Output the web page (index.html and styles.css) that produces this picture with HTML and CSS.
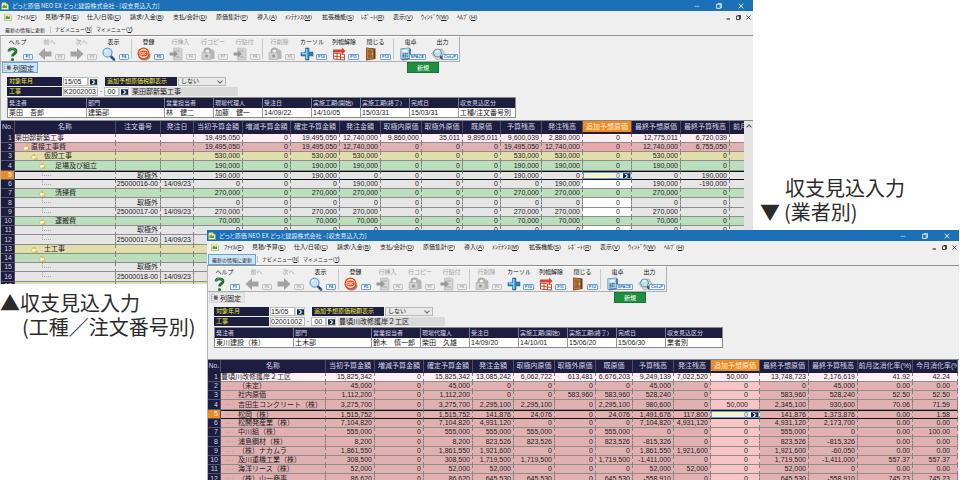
FILE: index.html
```html
<!DOCTYPE html>
<html lang="ja">
<head>
<meta charset="utf-8">
<title>収支見込入力</title>
<link rel="stylesheet" href="styles.css">
</head>
<body>
<svg class="sprite" aria-hidden="true">
  <symbol id="i-app" viewBox="0 0 16 16"><path fill="#e8efc0" stroke="#7fa05a" d="M1 3h11l3 3v9H1z"/><path fill="#5d9a4c" d="M3 8l3-3 3 3 3-2v6H3z"/><path fill="#f4e37a" d="M2 1h8v3H2z"/></symbol>
  <symbol id="i-help" viewBox="0 0 28 28"><path fill="none" stroke="#1c6b35" stroke-width="5.500" d="M6 9c0-7 14-7 14 0 0 5-7 4-7 10"/><path fill="none" stroke="#49a866" stroke-width="2" d="M6 8c0-6 13-6 13 0"/><circle cx="13" cy="25" r="3" fill="#1c6b35"/></symbol>
  <symbol id="i-prev" viewBox="0 0 28 28"><path fill="#a3a3a3" d="M1 14L14 2v7h13v10H14v7z"/></symbol>
  <symbol id="i-next" viewBox="0 0 28 28"><path fill="#a3a3a3" d="M27 14L14 2v7H1v10h13v7z"/></symbol>
  <symbol id="i-view" viewBox="0 0 28 28"><path stroke="#33557a" stroke-width="5" stroke-linecap="round" d="M17 18l7 7"/><circle cx="11" cy="11" r="9" fill="#bfe6fb" stroke="#7c9cb8" stroke-width="2.500"/><path fill="#fff" d="M5 11c0-4 3-6 7-6-3 2-5 4-7 6z"/></symbol>
  <symbol id="i-save" viewBox="0 0 28 28"><ellipse cx="15" cy="18" rx="12" ry="9" fill="#8f8f8f"/><circle cx="13" cy="13" r="12" fill="#d9482b"/><circle cx="13" cy="13" r="9.500" fill="#ffd995"/><ellipse cx="13" cy="13" rx="8.500" ry="6" fill="#e4572e"/><path fill="none" stroke="#fff" stroke-width="1.500" d="M9 10.500a2.500 2.500 0 1 0 .1 0zM14 10v6M18 10l-3 3 3 3"/></symbol>
  <symbol id="i-ins" viewBox="0 0 28 28"><path fill="#d4d4d4" stroke="#a6a6a6" d="M9 2h14l3 3v21H9z"/><path stroke="#aaa" stroke-width="2" d="M13 8h9M13 20h9"/><path fill="#999" d="M1 11h9V7l8 7-8 7v-4H1z"/></symbol>
  <symbol id="i-copy" viewBox="0 0 28 28"><path fill="none" stroke="#aaa" stroke-width="4" d="M7 13V8c0-7 12-7 12 0v5"/><path fill="#cfcfcf" stroke="#a2a2a2" d="M2 11h18v14H2z"/><path fill="#b5b5b5" d="M16 5h8l3 4v15h-7V10h-4z"/><circle cx="11" cy="18" r="3" fill="#979797"/></symbol>
  <symbol id="i-cursor" viewBox="0 0 28 28"><path fill="#2f7fb5" stroke="#1b5781" d="M11 2h7v8h8v8h-8v8h-7v-8H2v-8h9z"/><path fill="#8fd0f0" d="M12 4h3v20h-3zM4 12h9v3H4z"/><path fill="#d7edf8" d="M2 5h7v6H2z"/></symbol>
  <symbol id="i-cols" viewBox="0 0 28 28"><path fill="#fff" stroke="#c34f32" stroke-width="2" d="M3 12l22 3v11L3 24zM10 13v12M17 14v12M3 18l22 3"/><path fill="#d9402e" d="M27 8l-7-7v4H2v6h18v4z"/></symbol>
  <symbol id="i-door" viewBox="0 0 28 28"><path fill="#6b3a14" d="M4 1l19 2v21L4 27z"/><path fill="#b77b43" d="M5 2l14 2v20L5 25z"/><path fill="#9a602d" d="M8 6l8 1v6H8zM8 15h8v7H8z"/><circle cx="17" cy="14" r="1.500" fill="#f3d36b"/></symbol>
  <symbol id="i-calc" viewBox="0 0 28 28"><path fill="#4c7fa5" d="M3 3l17-2 4 3v21l-17 2-4-3z"/><path fill="#a8cbe2" d="M4 4l16-2v20L4 24z"/><path fill="#e9f8ff" d="M7 6l10-1v5L7 11z"/><path stroke="#35678d" stroke-width="2" stroke-dasharray="3 1" d="M7 14l10-1M7 17l10-1M7 20l10-1"/></symbol>
  <symbol id="i-out" viewBox="0 0 28 28"><path fill="#d4d4d4" stroke="#7d8a91" d="M1 13L8 6l14-2 5 9-2 9-13 4z"/><path stroke="#444" stroke-width="4" d="M18 18l6 7"/><circle cx="13" cy="12" r="8" fill="#b9e2f2" stroke="#71909f" stroke-width="2"/><path fill="#fff" d="M8 11l6-5 3 2z"/></symbol>
  <symbol id="i-fix" viewBox="0 0 16 16"><path fill="#fff" stroke="#6a7f99" d="M1 2h7v12H1zM1 6h7M1 10h7"/><path fill="#4b83c2" d="M7 4l8-1v11l-8-2z"/><path fill="#c0392b" d="M6 8l5-4v3h4v3h-4v3z"/></symbol>
  <symbol id="i-node" viewBox="0 0 14 14"><path fill="#fffbe2" stroke="#b8a468" d="M2 6l4-4 4 3v4l3 2v2H5L1 10z"/><path fill="#e8bf3c" d="M3 2h4l3 3-3 2-4-2zM6 10h7v3H6z"/></symbol>
  <symbol id="i-go" viewBox="0 0 18 14"><path fill="#16283f" d="M0 0h18v14H0z"/><path fill="none" stroke="#fff" stroke-width="2" d="M5 3h5l3 4-3 4H5M9 5v5"/></symbol>
  <symbol id="i-min" viewBox="0 0 10 10"><path stroke="currentColor" d="M1 5.500h8"/></symbol>
  <symbol id="i-max" viewBox="0 0 10 10"><path fill="none" stroke="currentColor" stroke-width="1.500" d="M1 2h6v7H1zM4 2V1h5v7H7"/></symbol>
  <symbol id="i-close" viewBox="0 0 10 10"><path stroke="currentColor" stroke-width="1.500" d="M1 1l8 8M9 1L1 9"/></symbol>
  <symbol id="i-low" viewBox="0 0 10 10"><path stroke="currentColor" stroke-width="2" d="M1 8h7"/></symbol>
</svg>
<main class="desk">
  <section class="win win-work" id="work"></section>
  <section class="win win-vendor" id="vendor"></section>
  <p class="caption caption-work"><span>▲収支見込入力</span><span class="second">(工種／注文番号別)</span></p>
  <p class="caption caption-vendor"><span class="second">収支見込入力</span><span class="pair"><span>▼</span><span>(業者別)</span></span></p>
</main>
<script src="app.js"></script>
</body>
</html>
```
FILE: styles.css
```css
* { box-sizing: border-box; }
body {
  margin: 0;
  background: #fff;
  color: #1c1c1c;
  font-family: "Liberation Sans", "Noto Sans CJK JP", sans-serif;
  font-size: 6px;
}
button, input, select { font: inherit; color: inherit; margin: 0; padding: 0; border-radius: 0; }
button { background: none; border: 0; }
svg { display: block; }
.sprite { position: absolute; width: 0; height: 0; }
.desk { position: relative; height: 100vh; min-height: 480px; overflow: hidden; }

.win {
  position: absolute;
  display: flex;
  flex-direction: column;
  overflow: hidden;
  background: #efefef;
}
.win-work { top: 0; left: 0; right: 207px; height: 284px; }
.win-vendor { top: 230px; left: 207px; right: 1px; bottom: 0; }

.titlebar {
  display: flex;
  align-items: center;
  flex: none;
  height: 11px;
  gap: 3px;
  padding: 0 9px 0 1px;
  background: #1b70b8;
  color: #e6f1fa;
}
.titlebar h1 { flex: 1; margin: 0; font-family: "Noto Sans CJK JP", sans-serif; font-size: 6px; font-weight: 400; line-height: 11px; white-space: nowrap; font-feature-settings: "palt"; }
.app-icon { width: 8px; height: 8px; }
.win-buttons { display: flex; gap: 16px; }
.win-buttons svg { width: 6px; height: 6px; }

.menubar { display: flex; align-items: center; flex: none; height: 12px; padding: 0 2px 0 4px; }
.menu {
  display: grid;
  flex: 1;
  grid-template-columns: 28px 42px 43px 43px 43px 41px 28px 37px 39px 32px 28px 36px 1fr;
  margin-left: 5px;
}
.menu button { text-align: left; line-height: 12px; white-space: nowrap; }
.mdi { display: flex; gap: 5px; color: #111; }
.mdi svg { width: 5px; height: 5px; }
u { text-decoration-thickness: 1px; }

.subbar { display: flex; align-items: center; flex: none; height: 12px; padding-left: 1px; font-size: 5px; }
.subbar button { height: 11px; white-space: nowrap; border: 1px solid transparent; }
.subbar .wide { width: 48px; margin-right: 1px; }
.subbar .item { width: 41px; border: 0; border-left: 1px solid #c4c4c4; height: 7px; line-height: 7px; text-align: left; padding-left: 4px; }
.subbar .item:last-child { border-right: 1px solid #c4c4c4; }
.subbar .wide.on, .fix.on { background: #cce4f7; border: 1px solid #6aa5d8; }

.body { flex: 1; display: flex; flex-direction: column; border-top: 1px solid #8f8f8f; border-left: 1px solid #b4b4b4; min-height: 0; }
.toolbar { display: flex; align-self: flex-start; flex: none; gap: 3px; height: 26px; padding-left: 5px; border-top: 1px solid #fff; border-right: 1px solid #b0b0b0; border-bottom: 1px solid #b0b0b0; }
.group { display: flex; position: relative; }
.group + .group::before { content: ""; position: absolute; left: -6px; top: 2px; height: 20px; border-left: 1px solid #c8c8c8; }
.tool { position: relative; width: 32px; text-align: left; }
.toolbar .group:last-child .tool:last-child { width: 28px; }
.tool b { display: block; width: 23px; text-align: center; font-weight: 400; line-height: 8px; height: 8px; white-space: nowrap; color: #111; }
.tool svg { width: 14px; height: 14px; margin-top: 1px; }
.tool kbd {
  position: absolute;
  right: 5px;
  bottom: 1px;
  min-width: 10px;
  height: 6px;
  padding: 0 1px;
  border: 1px solid #6aa3d6;
  border-radius: 1px;
  background: #f3faff;
  color: #1c66b0;
  font: bold 4px/4px "Liberation Sans", sans-serif;
  text-align: center;
}
.toolbar .group:last-child .tool:last-child kbd { right: 1px; }
.tool:disabled b { color: #a2a2a2; }
.tool:disabled kbd { border-color: #c2c2c2; color: #aaa; background: #efefef; }

.actions { display: grid; grid-template-columns: 405px 32px; flex: none; height: 11px; padding-left: 1px; }
.fix { display: flex; align-items: center; gap: 2px; width: 36px; height: 11px; padding-left: 1px; border: 1px solid #d8d8d8; font-size: 7px; background: #e6e6e6; white-space: nowrap; }
.fix svg { width: 7px; height: 7px; }
.new { background: #1f8f3f; color: #fff; border: 1px solid #187533; line-height: 8px; }

.form { flex: none; display: grid; gap: 1px; padding: 4px 0 1px 6px; }
.line { display: flex; align-items: stretch; height: 9px; }
.tag { width: 55px; padding-left: 2px; background: #1c1d3f; color: #f0ea3c; line-height: 9px; white-space: nowrap; margin-right: 1px; overflow: hidden; }
.tag.long { width: 72px; margin-left: 7px; }
.line input { width: 25px; height: 9px; border: 1px solid #b9b9b9; background: #fff; font-size: 7px; line-height: 7px; }
.line .code { width: 35px; }
.line .branch { width: 15px; text-align: center; }
.go { display: flex; align-items: center; justify-content: center; width: 10px; height: 9px; border: 1px solid #c8c8c8; background: #f4f4f4; }
.go svg { width: 7px; height: 6px; }
.dash { width: 6px; text-align: center; line-height: 9px; }
.line select { width: 48px; height: 9px; border: 1px solid #b9b9b9; appearance: none; background: #e9e9e9; padding-left: 2px; line-height: 7px; }
.pick { position: relative; }
.pick::after { content: ""; position: absolute; right: 4px; top: 2px; width: 3px; height: 3px; border: solid #666; border-width: 0 1px 1px 0; transform: rotate(45deg); }
.line output { width: 107px; margin-left: 2px; padding-left: 1px; background: #d9d9d9; font-size: 7px; line-height: 9px; white-space: nowrap; }

table { border-collapse: separate; border-spacing: 0; table-layout: fixed; }
th, td { padding: 0; font-weight: 400; white-space: nowrap; overflow: hidden; }
.info { flex: none; width: 508px; margin-left: 6px; border: 1px solid #8a8a8a; }
.info th { height: 10px; background: #1c1d3f; color: #d9dae6; text-align: left; padding-left: 1px; line-height: 9px; border-right: 1px solid #77788c; }
.info td { height: 9px; background: #fff; font-size: 7px; line-height: 8px; padding-left: 1px; border-right: 1px solid #999; }
.info th:last-child, .info td:last-child { border-right: 0; }
.info col { width: 49px; }
.info col:nth-child(1) { width: 79px; }
.info col:nth-child(2) { width: 78px; }
.info col:nth-child(9) { width: 56px; }

.sheet { display: flex; flex: 1; min-height: 0; margin-top: 2px; border-top: 1px solid #8a8a8a; overflow: hidden; }
.win-vendor .sheet { margin-top: 11px; }
.pane { flex: 1; overflow: hidden; }
.win-vendor .pane { margin-right: 1px; }
.grid { font-size: 7px; }
.grid th { height: 13px; background: #1c1d3f; color: #d3d4e2; line-height: 10px; border-right: 1px solid #4d4e6a; border-bottom: 2px solid #1c1d3f; }
.grid thead th.hot { background: #ee8a22; color: #fff1dc; border-bottom-color: #1c1d3f; }
.grid tbody th { height: 9px; line-height: 8px; text-align: right; padding-right: 2px; border-bottom: 1px solid #55566e; }
.grid td { height: 9px; line-height: 8px; text-align: right; padding-right: 2px; border-right: 1px dashed #8b8080; border-bottom: 1px solid #8d8d8d; }
.grid tbody tr:nth-child(4n) > * { height: 10px; }
.grid td.edit { padding-right: 11px; }
.grid td.name { text-align: left; padding: 0; }
.win-vendor .grid td:last-child { padding-right: 7px; }
.win-vendor .grid thead th:last-child { text-align: left; padding-left: 3px; }
.grid col { width: 49px; }
.grid .w13 { width: 13px; }
.grid .w14 { width: 14px; }
.grid .w33 { width: 33px; }
.grid .w37 { width: 37px; }
.grid .w38 { width: 38px; }
.grid .w41 { width: 41px; }
.grid .w45 { width: 45px; }
.grid .w48 { width: 48px; }
.grid .w55 { width: 55px; }
.grid .w101 { width: 101px; }
.grid .w105 { width: 105px; }
.top td { background: #ffeef2; }
.pink td { background: #e1b1b2; }
.yellow td { background: #e1deac; }
.green td { background: #bbdebd; }
.grey td { background: #e5e5e5; }
.grey td.edit { background: #fff; }
.pink td.edit { background: #f8c5c6; }
.win-work .pink td.edit { background: #e8a9aa; }
.grid .current td { border-top: 1px solid #111; border-bottom: 1px solid #111; line-height: 7px; }
.grid .current th { background: #ee8a22; color: #fff; }
.grid .current td.edit { padding: 0; background: #f7f4cd; }
.cell { display: flex; height: 7px; outline: 1px solid #6ba0dc; outline-offset: -1px; }
.cell input { flex: 1; min-width: 0; height: 7px; border: 0; background: none; text-align: right; padding-right: 1px; color: #2a6cc0; }
.cell .go { height: 7px; border: 0; }

.tree { display: flex; align-items: center; height: 8px; line-height: 8px; }
.current .tree { height: 7px; line-height: 7px; }
.tree svg { flex: none; width: 7px; height: 7px; margin-right: 1px; }
.lv1 { padding-left: 8px; }
.lv2 { padding-left: 16px; }
.lv3 { padding-left: 24px; }
.lv2 svg { margin-right: 6px; }
.lv3 svg { margin-right: 9px; }
.leaf::before { content: ""; width: 8px; height: 4px; margin-left: 27px; border-left: 1px dotted #aaa; border-bottom: 1px dotted #aaa; margin-top: -4px; }
.vendor-name::before { content: ""; width: 7px; margin: 0 5px; border-bottom: 1px dotted #c49a9b; }
.scroll { flex: none; width: 9px; background: #e4e4e4; padding-top: 4px; }
.scroll::before { content: ""; display: block; width: 3px; height: 3px; margin: 0 auto; border: solid #555; border-width: 1px 0 0 1px; transform: rotate(45deg); }

.caption { position: absolute; margin: 0; color: #2b2b2b; font: 20px/24px "Noto Sans CJK JP", sans-serif; white-space: nowrap; }
.caption > span { display: block; }
.caption .pair { display: flex; gap: 4px; }
.caption-work { top: 291px; left: 0; }
.caption-work .second { padding-left: 22px; }
.caption-vendor { top: 176px; left: 760px; }
.caption-vendor .second { padding-left: 25px; }
```
FILE: app.js
```js
const icon = (id, cls = "") => `<svg class="${cls}" aria-hidden="true"><use href="#i-${id}"/></svg>`;

const MENU = [["ﾌｧｲﾙ", "F"], ["見積/予算", "E"], ["仕入/日報", "C"], ["請求/入金", "B"], ["支払/会計", "D"],
  ["原価集計", "P"], ["導入", "A"], ["ﾒﾝﾃﾅﾝｽ", "M"], ["拡張機能", "S"], ["ﾚﾎﾟｰﾄ", "R"], ["表示", "V"], ["ｳｨﾝﾄﾞｳ", "W"], ["ﾍﾙﾌﾟ", "H"]];

// label, icon, shortcut, disabled
const TOOLS = [
  [["ヘルプ", "help", "F1"], ["前へ", "prev", "F2", 1], ["次へ", "next", "F3", 1], ["表示", "view", "F4"]],
  [["登録", "save", "F5"], ["行挿入", "ins", "F6", 1], ["行コピー", "copy", "F7", 1], ["行貼付", "ins", "F8", 1]],
  [["行削除", "copy", "F9", 1], ["カーソル", "cursor", "F10"], ["列幅解除", "cols", "F11"], ["閉じる", "door", "F12"]],
  [["電卓", "calc", "SPACE"], ["出力", "out", "Ctrl+P"]]
];

const INFO = ["発注者", "部門", "営業担当者", "現場代理人", "受注日", "実施工期(開始)", "実施工期(終了)", "完成日", "収支見込区分"];
const AMOUNTS = ["当初予算金額", "増減予算金額", "確定予算金額", "発注金額", "取極内原価", "取極外原価", "既原価", "予算残高", "発注残高", "追加予想原価", "最終予想原価", "最終予算残高"];

const same = v => `${v} 0 ${v} ${v} 0 0 0 ${v} ${v} 0 ${v} 0`;
const none = "0 0 0 0 0 0 0 0 0 0 0 0";
const order = v => `0 0 0 ${v} 0 0 0 0 ${v} 0 ${v} -${v}`;
const node = (lv, t) => `<div class="tree lv${lv}">${icon("node")}${t}</div>`;
const leaf = `<div class="tree leaf"></div>`;
const firm = t => `<div class="tree vendor-name">${t}</div>`;

const screens = {
  work: {
    fixOn: true, code: "K2002003", project: "栗田邸新築工事",
    info: ["栗田　吾郎", "建築部", "林　健二", "加藤　健一", "14/09/22", "14/10/05", "15/03/31", "15/03/31", "工種/注文番号別"],
    cols: [14, 101, 45, 33, 49, 48, 49, 41, 41, 41, 38, 41, 41, 49, 49, 49, 49],
    heads: ["No.", "名称", "注文番号", "発注日", ...AMOUNTS, "前月迄消化率"],
    rows: [
      ["top", "栗田邸新築工事", "", "", "19,495,050 0 19,495,050 12,740,000 9,860,000 35,011 9,895,011 9,600,039 2,880,000 0 12,775,011 6,720,039"],
      ["pink", node(1, "直接工事費"), "", "", "19,495,050 0 19,495,050 12,740,000 0 0 0 19,495,050 12,740,000 0 12,740,000 6,755,050"],
      ["yellow", node(2, "仮設工事"), "", "", same("530,000")],
      ["green", node(3, "足場及び組立"), "", "", same("190,000")],
      ["grey current", leaf, "取極外", "", "190,000 0 190,000 0 0 0 0 190,000 0 0 0 190,000"],
      ["grey", leaf, "25000016-00", "14/09/23", order("190,000")],
      ["green", node(3, "清掃費"), "", "", same("270,000")],
      ["grey", leaf, "取極外", "", none],
      ["grey", leaf, "25000017-00", "14/09/23", same("270,000")],
      ["green", node(3, "運搬費"), "", "", same("70,000")],
      ["grey", leaf, "取極外", "", none],
      ["grey", leaf, "25000017-00", "14/09/23", same("70,000")],
      ["yellow", node(2, "土工事"), "", "", none],
      ["green", node(3, ""), "", "", none],
      ["grey", leaf, "取極外", "", none],
      ["grey", leaf, "25000018-00", "14/09/23", none],
      ["yellow", "", "", "", none]
    ].map(([cls, name, no, date, v]) => [cls, name, no, date, ...v.split(" "), ""]),
    scroll: true
  },
  vendor: {
    refreshOn: true, code: "02001002", project: "豊頃川改修護岸２工区",
    info: ["東川建設（株）", "土木部", "鈴木　慎一郎", "柴田　久雄", "14/09/20", "14/10/01", "15/06/20", "15/06/30", "業者別"],
    cols: [13, 105, 49, 49, 49, 41, 41, 41, 37, 41, 37, 49, 49, 49, 55, 45],
    heads: ["No.", "名称", ...AMOUNTS, "前月迄消化率(%)", "今月消化率(%)"],
    rows: [
      ["top", "豊頃川改修護岸２工区", "15,825,342 0 15,825,342 13,085,242 6,062,722 613,481 6,676,203 9,249,139 7,022,520 50,000 13,748,723 2,176,619 41.92 42.24"],
      ["pink", firm("（未定）"), "45,000 0 45,000 0 0 0 0 45,000 0 0 0 45,000 0.00 0.00"],
      ["pink", firm("社内原価"), "1,112,200 0 1,112,200 0 0 583,960 583,960 528,240 0 0 583,960 528,240 52.50 52.50"],
      ["pink", firm("吉田生コンクリート（株）"), "3,275,700 0 3,275,700 2,295,100 2,295,100 0 2,295,100 980,600 0 50,000 2,345,100 930,600 70.06 71.59"],
      ["pink current", firm("松岡（株）"), "1,515,752 0 1,515,752 141,876 24,076 0 24,076 1,491,676 117,800 0 141,876 1,373,876 0.00 1.58"],
      ["pink", firm("松開発産業（株）"), "7,104,820 0 7,104,820 4,931,120 0 0 0 7,104,820 4,931,120 0 4,931,120 2,173,700 0.00 0.00"],
      ["pink", firm("中川組（株）"), "555,000 0 555,000 555,000 555,000 0 555,000 0 0 0 555,000 0 0.00 100.00"],
      ["pink", firm("浦島鋼材（株）"), "8,200 0 8,200 823,526 823,526 0 823,526 -815,326 0 0 823,526 -815,326 0.00 0.00"],
      ["pink", firm("（株）ナカムラ"), "1,861,550 0 1,861,550 1,921,600 0 0 0 1,861,550 1,921,600 0 1,921,600 -60,050 0.00 0.00"],
      ["pink", firm("及川重機工業（株）"), "308,500 0 308,500 1,719,500 1,719,500 0 1,719,500 -1,411,000 0 0 1,719,500 -1,411,000 557.37 557.37"],
      ["pink", firm("海洋リース（株）"), "52,000 0 52,000 52,000 0 0 0 52,000 52,000 0 52,000 0 0.00 0.00"],
      ["pink", firm("（株）山一商事"), "86,620 0 86,620 645,530 645,530 0 645,530 -558,910 0 0 645,530 -558,910 745.23 745.23"]
    ].map(([cls, name, v]) => [cls, name, ...v.split(" ")])
  }
};

const go = label => `<button class="go" type="button" aria-label="${label}">${icon("go")}</button>`;

function sheet(s) {
  const hot = s.heads.indexOf("追加予想原価");
  const width = s.cols.reduce((a, b) => a + b, 0);
  const cell = (v, i, current) => {
    if (i === 1) return `<td class="name">${v}</td>`;
    if (i !== hot) return `<td>${v}</td>`;
    return current
      ? `<td class="edit"><div class="cell"><input value="${v}" aria-label="追加予想原価">${go("参照")}</div></td>`
      : `<td class="edit">${v}</td>`;
  };
  return `<div class="sheet"><div class="pane"><table class="grid" style="width:${width}px">
    <colgroup>${s.cols.map(w => `<col class="w${w}">`).join("")}</colgroup>
    <thead><tr>${s.heads.map((h, i) => `<th scope="col" class="${i === hot ? "hot" : ""}">${h}</th>`).join("")}</tr></thead>
    <tbody>${s.rows.map(([cls, ...v], r) => `<tr class="${cls}"><th scope="row">${r + 1}</th>${v.map((x, i) => cell(x, i + 1, cls.includes("current"))).join("")}</tr>`).join("")}</tbody>
  </table></div>${s.scroll ? '<div class="scroll"></div>' : ""}</div>`;
}

for (const [id, s] of Object.entries(screens)) {
  document.getElementById(id).innerHTML = `
  <header class="titlebar">${icon("app", "app-icon")}<h1>どっと原価 NEO EX どっと建設株式会社 - [収支見込入力]</h1>
    <div class="win-buttons"><button aria-label="最小化">${icon("min")}</button><button aria-label="元に戻す">${icon("max")}</button><button aria-label="閉じる">${icon("close")}</button></div></header>
  <nav class="menubar">${icon("app", "app-icon")}
    <div class="menu">${MENU.map(([t, k]) => `<button>${t}(<u>${k}</u>)</button>`).join("")}</div>
    <div class="mdi">${icon("low")}${icon("max")}${icon("close")}</div></nav>
  <nav class="subbar"><button class="wide ${s.refreshOn ? "on" : ""}">最新の情報に更新</button><button class="item">ナビメニュー(<u>N</u>)</button><button class="item">マイメニュー(<u>Y</u>)</button></nav>
  <div class="body">
    <div class="toolbar">${TOOLS.map(g => `<div class="group">${g.map(([t, i, k, off]) => `<button class="tool" ${off ? "disabled" : ""}><b>${t}</b>${icon(i)}<kbd>${k}</kbd></button>`).join("")}</div>`).join("")}</div>
    <div class="actions"><button class="fix ${s.fixOn ? "on" : ""}">${icon("fix")}列固定</button><button class="new">新規</button></div>
    <form class="form">
      <div class="line"><label class="tag" for="${id}-month">対象年月</label><input id="${id}-month" value="15/05">${go("年月を選択")}<label class="tag long" for="${id}-tax">追加予想原価税額表示</label><span class="pick"><select id="${id}-tax"><option>しない</option></select></span></div>
      <div class="line"><label class="tag" for="${id}-code">工事</label><input class="code" id="${id}-code" value="${s.code}"><span class="dash">-</span><input class="branch" value="00" aria-label="枝番">${go("工事を選択")}<output>${s.project}</output></div>
    </form>
    <table class="info"><colgroup>${INFO.map(() => "<col>").join("")}</colgroup>
      <thead><tr>${INFO.map(h => `<th scope="col">${h}</th>`).join("")}</tr></thead>
      <tbody><tr>${s.info.map(v => `<td>${v}</td>`).join("")}</tr></tbody></table>
    ${sheet(s)}
  </div>`;
}
```
